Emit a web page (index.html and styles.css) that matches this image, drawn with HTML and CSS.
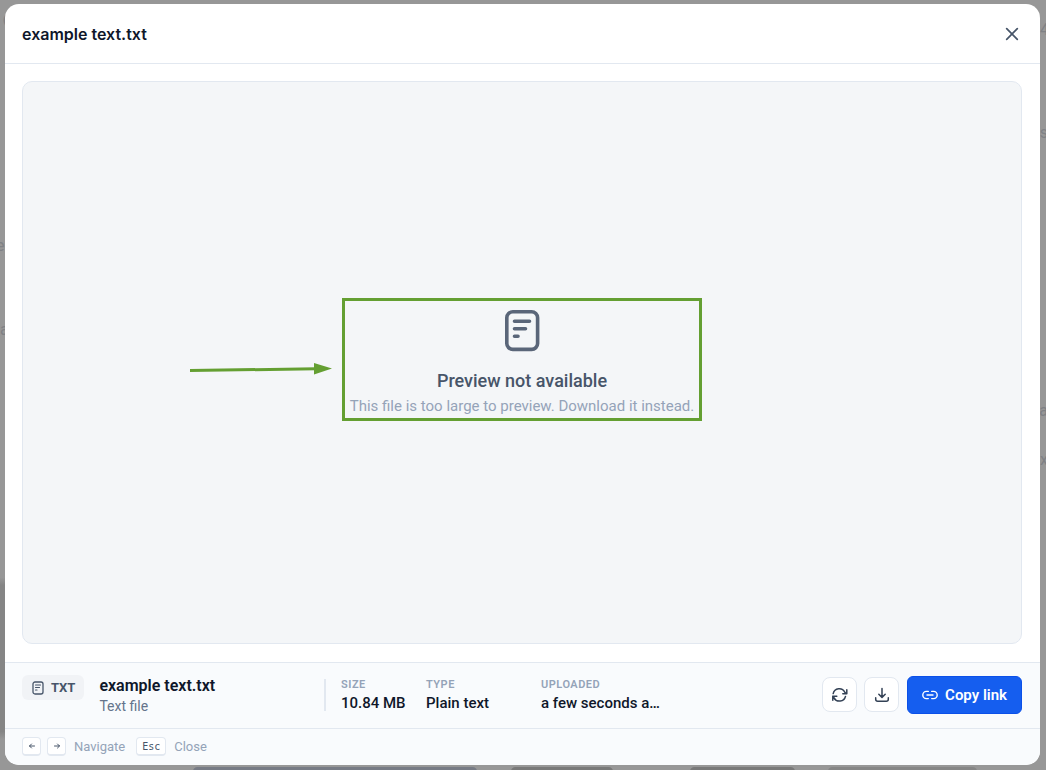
FILE: index.html
```html
<!DOCTYPE html>
<html lang="en">
<head>
    <meta charset="UTF-8" />
    <meta name="viewport" content="width=device-width, initial-scale=1" />
    <title>example text.txt</title>
    <link rel="stylesheet" href="styles.css">
</head>
<body>
    <!-- Page behind the dialog -->
    <div class="backdrop" aria-hidden="true">
        <span class="ghost ghost-heading">9</span>
        <span class="ghost ghost-left-1">e</span>
        <span class="ghost ghost-left-2">a</span>
        <span class="ghost ghost-right-1">4</span>
        <span class="ghost ghost-right-2">s</span>
        <span class="ghost ghost-right-3">a</span>
        <span class="ghost ghost-right-4">x</span>
        <span class="card card-1"></span>
        <span class="card card-2"></span>
        <span class="card card-3"></span>
        <span class="card card-4"></span>
    </div>

    <div class="modal" role="dialog" aria-labelledby="modalTitle">
        <header class="modal-header">
            <h1 id="modalTitle">example text.txt</h1>
            <button class="close-btn" type="button" aria-label="Close">
                <svg width="20" height="20" viewBox="0 0 20 20"><path d="M4.7 4.7l10.6 10.6M15.3 4.7L4.7 15.3" stroke-width="1.7" /></svg>
            </button>
        </header>

        <main class="modal-body">
            <div class="preview">
                <div class="notice">
                    <svg class="notice-icon" width="36" height="42" viewBox="0 0 36 42">
                        <rect x="2.8" y="1.8" width="30.8" height="37.6" rx="6" stroke-width="3.6" />
                        <path d="M10.5 11.2h15M10.5 18.7h11M10.5 26.2h3.5" stroke-width="3.6" />
                    </svg>
                    <h2>Preview not available</h2>
                    <p>This file is too large to preview. Download it instead.</p>
                    <svg class="arrow" width="142" height="14" viewBox="0 0 142 14">
                        <path class="arrow-line" d="M0 8.5L126 6.8" />
                        <path class="arrow-head" d="M124 1l18 5.5L124 12.5z" />
                    </svg>
                </div>
            </div>
        </main>

        <section class="details">
            <div class="file">
                <span class="badge">
                    <svg width="12" height="14" viewBox="0 0 12 14">
                        <rect x="1" y="1" width="10" height="12" rx="2" stroke-width="1.3" />
                        <path d="M3.5 4h5M3.5 6.5h4M3.5 9h1.5" stroke-width="1.2" />
                    </svg>
                    TXT
                </span>
                <div class="file-text">
                    <strong>example text.txt</strong>
                    <span>Text file</span>
                </div>
            </div>
            <span class="divider"></span>
            <dl class="meta">
                <div class="meta-size">
                    <dt>Size</dt>
                    <dd>10.84 MB</dd>
                </div>
                <div class="meta-type">
                    <dt>Type</dt>
                    <dd>Plain text</dd>
                </div>
                <div class="meta-uploaded">
                    <dt>Uploaded</dt>
                    <dd>a few seconds ago</dd>
                </div>
            </dl>
            <div class="actions">
                <button class="icon-btn" type="button" aria-label="Refresh">
                    <svg width="16" height="16" viewBox="0 0 16 16">
                        <path d="M1.2 6.6A6.2 6.2 0 0 1 12.8 5.2L14.4 6.8M14.8 2.8v4H10.8M13.5 9.4A6.2 6.2 0 0 1 2 10.8L.8 9.2M.8 13.2v-4h4" stroke-width="1.5" />
                    </svg>
                </button>
                <button class="icon-btn" type="button" aria-label="Download">
                    <svg width="16" height="16" viewBox="0 0 16 16">
                        <path d="M8 1.5v8.8M4.8 7.2L8 10.4l3.2-3.2M1.7 10.7v1.5a2 2 0 0 0 2 2h8.6a2 2 0 0 0 2-2v-1.5" stroke-width="1.5" />
                    </svg>
                </button>
                <button class="copy-btn" type="button">
                    <svg width="16" height="16" viewBox="0 0 16 16">
                        <path d="M6.3 4.4H4.4a3.6 3.6 0 0 0 0 7.2h1.9M9.7 4.4h1.9a3.6 3.6 0 0 1 0 7.2H9.7M5 8h6" stroke-width="1.4" />
                    </svg>
                    Copy link
                </button>
            </div>
        </section>

        <footer class="hints">
            <kbd><svg width="8" height="8" viewBox="0 0 8 8"><path d="M6.5 4h-5M3.5 2l-2 2 2 2" /></svg></kbd>
            <kbd><svg width="8" height="8" viewBox="0 0 8 8"><path d="M1.5 4h5M4.5 2l2 2-2 2" /></svg></kbd>
            <span>Navigate</span>
            <kbd class="key-esc">Esc</kbd>
            <span>Close</span>
        </footer>
    </div>
</body>
</html>
```

FILE: styles.css
```css
* {
    box-sizing: border-box;
}
body {
    margin: 0;
    padding: 4px 6px 5px 5px;
    height: 100vh;
    display: flex;
    overflow: hidden;
    background: #979797;
    font-family: Roboto, "Liberation Sans", sans-serif;
    color: #0f172a;
}
h1, h2, p, dl, dd {
    margin: 0;
}
button {
    font-family: inherit;
    padding: 0;
    cursor: pointer;
}
svg {
    display: block;
    flex: none;
    fill: none;
    stroke: currentColor;
    stroke-linecap: round;
    stroke-linejoin: round;
}

/* page behind */
.backdrop {
    position: absolute;
    inset: 0;
    overflow: hidden;
    color: #7f8185;
    font-size: 16px;
    line-height: 20px;
    background: linear-gradient(to bottom, #979797 75%, #858585 76%, #858585 95%, #979797 96%) left / 20px 100% no-repeat #979797;
}
.ghost, .card {
    position: absolute;
}
.ghost-heading { left: 2px; top: 10px; font-size: 32px; line-height: 28px; }
.ghost-left-1 { left: -4px; top: 236px; }
.ghost-left-2 { left: 0; top: 320px; }
.ghost-right-1 { right: -3px; top: 20px; }
.ghost-right-2 { right: -2px; top: 123px; }
.ghost-right-3 { right: -2px; top: 401px; }
.ghost-right-4 { right: -2px; top: 450px; }
.card {
    bottom: -6px;
    height: 9px;
    border-radius: 6px;
    background: #797979;
}
.card-1 { left: 193px; width: 284px; background: #777b85; }
.card-2 { left: 511px; width: 102px; }
.card-3 { left: 690px; width: 105px; }
.card-4 { left: 828px; width: 149px; background: #868686; }

.modal {
    position: relative;
    flex: 1;
    min-width: 0;
    display: flex;
    flex-direction: column;
    background: white;
    border-radius: 14px;
    overflow: hidden;
}
.modal-header {
    display: flex;
    align-items: center;
    justify-content: space-between;
    height: 60px;
    padding: 0 18px 0 17px;
    border-bottom: 1px solid #e2e8f0;
}
.modal-header h1 {
    font-family: Inter, Roboto, sans-serif;
    font-size: 16px;
    font-weight: 600;
    line-height: 24px;
}
.close-btn {
    border: none;
    background: none;
    color: #475569;
}

.modal-body {
    flex: 1;
    display: flex;
    padding: 17px 18px 18px 17px;
}
.preview {
    flex: 1;
    display: flex;
    align-items: center;
    justify-content: center;
    background: #f4f6f8;
    border: 1px solid #e2e8f0;
    border-radius: 10px;
}
.notice {
    position: relative;
    display: flex;
    flex-direction: column;
    align-items: center;
    padding: 9px 5px 1px;
    border: 3px solid #649f32;
    margin-bottom: 7px;
    color: #475569;
}
.notice-icon {
    color: #5a6679;
    margin-bottom: 17px;
}
.notice h2 {
    font-size: 18px;
    font-weight: 500;
    line-height: 24px;
    margin-bottom: 2px;
}
.notice p {
    font-size: 15px;
    line-height: 22px;
    color: #94a3b8;
}
/* points at the notice from the left */
.arrow {
    position: absolute;
    right: 100%;
    top: 61px;
    margin-right: 13px;
}
.arrow-line {
    stroke: #649f32;
    stroke-width: 3;
    stroke-linecap: butt;
}
.arrow-head {
    fill: #649f32;
    stroke: none;
}

.details {
    display: flex;
    align-items: center;
    height: 66px;
    padding: 0 18px 2px 17px;
    background: #f9fbfd;
    border-top: 1px solid #e2e8f0;
}
.file {
    display: flex;
    align-items: flex-start;
    gap: 15px;
    width: 302px;
    padding-top: 2px;
}
.badge {
    display: flex;
    align-items: center;
    gap: 7px;
    height: 25px;
    padding: 0 9px 0 10px;
    border-radius: 6px;
    background: #f1f3f6;
    color: #475569;
    font-size: 13px;
    font-weight: 700;
}
.file-text {
    display: flex;
    flex-direction: column;
}
.file-text strong {
    font-size: 16px;
    font-weight: 600;
    line-height: 22px;
}
.file-text span {
    font-size: 14px;
    line-height: 19px;
    color: #64748b;
}
.divider {
    width: 2px;
    height: 32px;
    margin-right: 15px;
    background: #e2e8f0;
}
.meta {
    display: flex;
    padding-top: 2px;
}
.meta-size {
    width: 85px;
}
.meta-type {
    width: 115px;
}
.meta-uploaded {
    width: 120px;
}
.meta dt {
    font-size: 11px;
    font-weight: 600;
    line-height: 14px;
    letter-spacing: 0.5px;
    text-transform: uppercase;
    color: #94a3b8;
}
.meta dd {
    font-size: 15px;
    font-weight: 500;
    line-height: 22px;
    overflow: hidden;
    white-space: nowrap;
    text-overflow: ellipsis;
}
.actions {
    display: flex;
    align-items: center;
    gap: 7px;
    margin-left: auto;
}
.icon-btn {
    display: flex;
    align-items: center;
    justify-content: center;
    width: 35px;
    height: 35px;
    border: 1px solid #e2e8f0;
    border-radius: 8px;
    background: white;
    color: #334155;
}
.copy-btn {
    display: flex;
    align-items: center;
    gap: 7px;
    height: 38px;
    margin-left: 1px;
    padding: 0 14px;
    border: 1px solid #0b50e8;
    border-radius: 6px;
    background: #155eef;
    color: white;
    font-size: 15px;
    font-weight: 600;
}

.hints {
    display: flex;
    align-items: center;
    height: 37px;
    padding: 0 17px 1px;
    background: #f9fbfd;
    border-top: 1px solid #e2e8f0;
    color: #94a3b8;
    font-size: 13px;
}
.hints kbd {
    display: flex;
    align-items: center;
    justify-content: center;
    min-width: 19px;
    height: 19px;
    margin-right: 6px;
    border: 1px solid #e2e8f0;
    border-bottom-width: 2px;
    border-radius: 4px;
    background: white;
    color: #475569;
    font-family: "DejaVu Sans Mono", monospace;
    font-size: 10px;
}
.hints span {
    margin-left: 2px;
    margin-right: 11px;
}
.hints .key-esc {
    min-width: 30px;
}
```
